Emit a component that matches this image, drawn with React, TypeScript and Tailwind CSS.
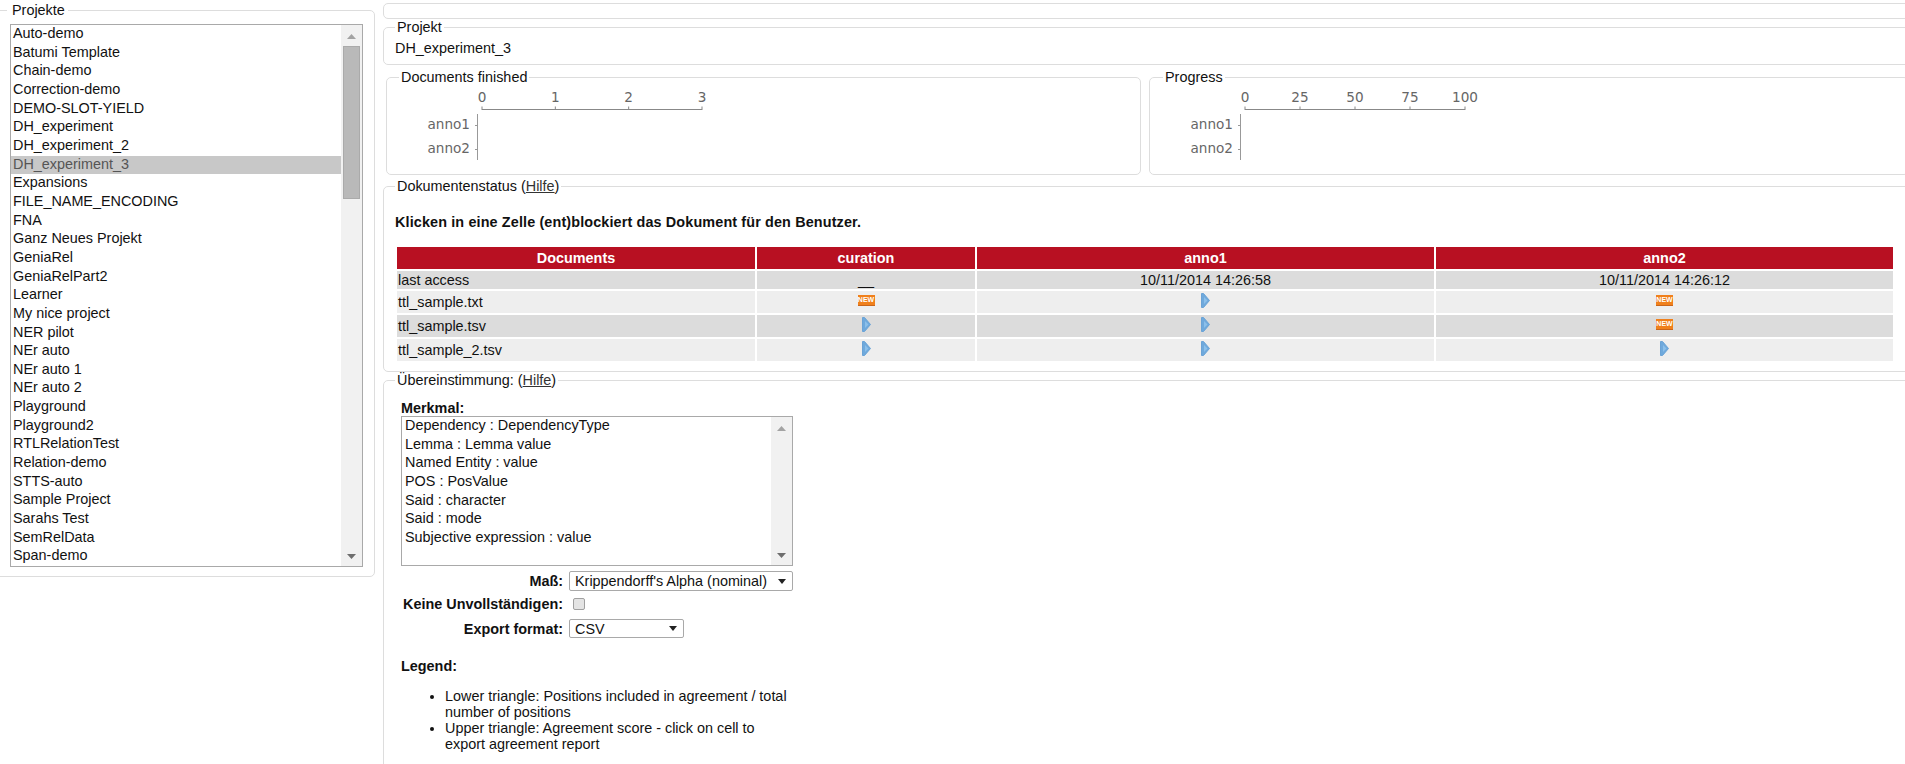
const PROJECTS = [
  'Auto-demo', 'Batumi Template', 'Chain-demo', 'Correction-demo', 'DEMO-SLOT-YIELD', 'DH_experiment',
  'DH_experiment_2', 'DH_experiment_3', 'Expansions', 'FILE_NAME_ENCODING', 'FNA', 'Ganz Neues Projekt',
  'GeniaRel', 'GeniaRelPart2', 'Learner', 'My nice project', 'NER pilot', 'NEr auto', 'NEr auto 1', 'NEr auto 2',
  'Playground', 'Playground2', 'RTLRelationTest', 'Relation-demo', 'STTS-auto', 'Sample Project', 'Sarahs Test',
  'SemRelData', 'Span-demo',
];

const FEATURES = [
  'Dependency : DependencyType', 'Lemma : Lemma value', 'Named Entity : value', 'POS : PosValue',
  'Said : character', 'Said : mode', 'Subjective expression : value',
];

type Mark = 'new' | 'open';

const ROWS: { name: string; cells: Mark[] }[] = [
  { name: 'ttl_sample.txt', cells: ['new', 'open', 'new'] },
  { name: 'ttl_sample.tsv', cells: ['open', 'open', 'new'] },
  { name: 'ttl_sample_2.tsv', cells: ['open', 'open', 'open'] },
];

function NewIcon() {
  return (
    <span className="mx-auto mt-[4px] block h-[11px] w-[17px] border-b border-[#c9651a] bg-[#f0801c] text-center text-[7px] font-bold leading-[10px] text-white">
      NEW
    </span>
  );
}

function OpenIcon() {
  return (
    <svg width="9" height="15" viewBox="0 0 9 15" className="mx-auto mt-[2px] block">
      <path d="M0.5 0.5 L2.5 0.5 L8.5 7.5 L2.5 14.5 L0.5 14.5 Z" fill="#6fa9dc" stroke="#6aa3d6" />
      <path d="M3 4 L6.5 7.5 L3 11 Z" fill="#8cc0ea" />
    </svg>
  );
}

function Scrollbar({ thumb }: { thumb?: boolean }) {
  return (
    <div className="relative flex w-[21px] shrink-0 flex-col items-center justify-between bg-[#f1f1f1] pb-[7px] pt-[9px]">
      <svg width="9" height="5" viewBox="0 0 9 5"><path d="M0 5 L4.5 0 L9 5 Z" fill="#a3a3a3" /></svg>
      {thumb && <div className="absolute left-[2px] top-[21px] h-[153px] w-[17px] border border-[#aaa] bg-[#b9b9b9]" />}
      <svg width="9" height="5" viewBox="0 0 9 5"><path d="M0 0 L4.5 5 L9 0 Z" fill="#6e6e6e" /></svg>
    </div>
  );
}

function Chart({ ticks }: { ticks: string[] }) {
  return (
    <svg width="400" height="89" className="block" fontFamily="'DejaVu Sans', sans-serif" fontSize="13.6">
      {ticks.map((t, i) => {
        const x = 95 + (220 * i) / (ticks.length - 1);
        return (
          <g key={t}>
            <text x={x} y="17" textAnchor="middle" fill="#666">{t}</text>
            <line x1={x} x2={x} y1="21.5" y2="25" stroke="#888" />
          </g>
        );
      })}
      <line x1="95" x2="315" y1="24.5" y2="24.5" stroke="#888" />
      <line x1="90.5" x2="90.5" y1="29" y2="75" stroke="#999" />
      {['anno1', 'anno2'].map((label, i) => (
        <g key={label}>
          <text x="83" y={44 + i * 24} textAnchor="end" fill="#666">{label}</text>
          <line x1="88" x2="90" y1={40.5 + i * 24} y2={40.5 + i * 24} stroke="#999" />
        </g>
      ))}
    </svg>
  );
}

function FakeSelect({ value, className }: { value: string; className: string }) {
  return (
    <div className={`flex items-center justify-between rounded-[2px] border border-[#a9a9a9] bg-white pl-[5px] pr-[6px] ${className}`}>
      <span>{value}</span>
      <svg width="8" height="5" viewBox="0 0 8 5"><path d="M0 0 L8 0 L4 5 Z" fill="#222" /></svg>
    </div>
  );
}

export default function App() {
  return (
    <div className="flex h-[764px] w-[1905px] items-start overflow-hidden bg-white font-['Liberation_Sans',Arial,sans-serif] text-[14.4px] leading-4 text-[#111]">
      <fieldset className="-ml-[6px] mt-[2px] w-[381px] shrink-0 rounded-[5px] border border-[#ddd] pb-[9px] pl-[15px] pr-[11px] pt-[6px]">
        <legend className="-ml-[3px] pl-[5px] pr-[3px]">Projekte</legend>
        <div className="flex h-[543px] border border-[#a9a9a9]">
          <div className="min-w-0 flex-1 overflow-hidden">
            {PROJECTS.map(p => (
              <div
                key={p}
                className={`h-[18.67px] pl-[2px] leading-[17px] ${p === 'DH_experiment_3' ? 'bg-[#c8c8c8] text-[#555]' : ''}`}
              >
                {p}
              </div>
            ))}
          </div>
          <Scrollbar thumb />
        </div>
      </fieldset>

      <div className="ml-[8px] w-[1530px] shrink-0 pt-[3px]">
        <div className="h-[16px] rounded-[5px] border border-[#ddd]" />

        <fieldset className="h-[46px] rounded-[5px] border border-[#ddd] pl-[11px] pt-[5px]">
          <legend className="px-[2px]">Projekt</legend>
          <p>DH_experiment_3</p>
        </fieldset>

        {/* Charts */}
        <div className="ml-[3px] mt-[4px] flex gap-[8px]">
          <fieldset className="h-[106px] w-[755px] rounded-[5px] border border-[#ddd]">
            <legend className="ml-[12px] px-[2px]">Documents finished</legend>
            <Chart ticks={['0', '1', '2', '3']} />
          </fieldset>
          <fieldset className="h-[106px] w-[760px] rounded-[5px] border border-[#ddd]">
            <legend className="ml-[13px] px-[2px]">Progress</legend>
            <Chart ticks={['0', '25', '50', '75', '100']} />
          </fieldset>
        </div>

        <fieldset className="mt-[3px] h-[194px] rounded-[5px] border border-[#ddd] pl-[11px] pt-[20px]">
          <legend className="px-[2px]">
            Dokumentenstatus (<a className="text-[#333] underline">Hilfe</a>)
          </legend>
          <p className="font-bold tracking-[0.13px]">Klicken in eine Zelle (ent)blockiert das Dokument für den Benutzer.</p>
          <table className="mt-[15px] w-[1500px] table-fixed border-separate border-spacing-[2px]">
            <colgroup>
              <col className="w-[358px]" />
              <col className="w-[218px]" />
              <col className="w-[457px]" />
              <col className="w-[457px]" />
            </colgroup>
            <thead>
              <tr className="h-[22px] bg-[#b81022] font-bold text-white">
                <th>Documents</th>
                <th>curation</th>
                <th>anno1</th>
                <th>anno2</th>
              </tr>
            </thead>
            <tbody>
              <tr className="h-[18px] bg-[#dcdcdc] text-center">
                <td className="pl-[1px] text-left">last access</td>
                <td>__</td>
                <td>10/11/2014 14:26:58</td>
                <td>10/11/2014 14:26:12</td>
              </tr>
              {ROWS.map((row, i) => (
                <tr key={row.name} className={`h-[22px] ${i % 2 ? 'bg-[#dcdcdc]' : 'bg-[#eeeeee]'}`}>
                  <td className="pl-[1px]">{row.name}</td>
                  {row.cells.map((c, j) => (
                    <td key={j} className="align-top">
                      {c === 'new' ? <NewIcon /> : <OpenIcon />}
                    </td>
                  ))}
                </tr>
              ))}
            </tbody>
          </table>
        </fieldset>

        <fieldset className="h-[420px] rounded-[5px] border border-[#ddd] pl-[17px] pt-[12px]">
          <legend className="-ml-[6px] px-[2px]">
            Übereinstimmung: (<a className="text-[#333] underline">Hilfe</a>)
          </legend>
          <div className="w-[392px]">
            <p className="font-bold">Merkmal:</p>
            <div className="flex h-[150px] border border-[#a9a9a9]">
              <div className="min-w-0 flex-1 overflow-hidden">
                {FEATURES.map(f => (
                  <div key={f} className="h-[18.67px] pl-[3px] leading-[17px]">{f}</div>
                ))}
              </div>
              <Scrollbar />
            </div>

            <div className="mt-[5px] flex items-center gap-[6px]">
              <span className="w-[162px] text-right font-bold">Maß:</span>
              <FakeSelect value="Krippendorff's Alpha (nominal)" className="h-[20px] w-[224px]" />
            </div>
            <div className="mt-[5px] flex items-center gap-[6px]">
              <span className="w-[162px] whitespace-nowrap text-right font-bold">Keine Unvollständigen:</span>
              <input type="checkbox" className="ml-[4px] h-[12px] w-[12px] appearance-none rounded-[2px] border border-[#a0a0a0] bg-[#e4e4e4]" />
            </div>
            <div className="mt-[7px] flex items-center gap-[6px]">
              <span className="w-[162px] text-right font-bold">Export format:</span>
              <FakeSelect value="CSV" className="h-[19px] w-[115px]" />
            </div>

            <p className="mt-[20px] font-bold">Legend:</p>
            <ul className="mt-[14px] list-disc pl-[44px]">
              <li>Lower triangle: Positions included in agreement / total number of positions</li>
              <li>Upper triangle: Agreement score - click on cell to export agreement report</li>
            </ul>
          </div>
        </fieldset>
      </div>
    </div>
  );
}
